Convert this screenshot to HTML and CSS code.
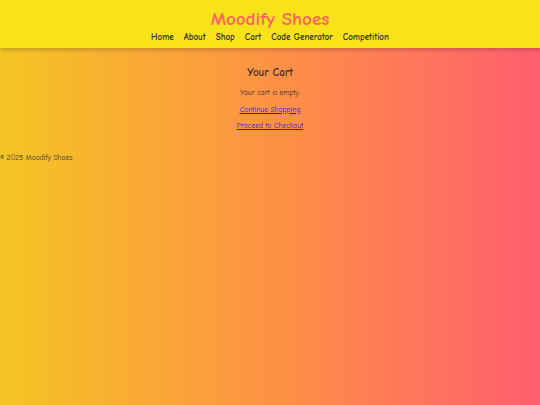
FILE: index.html
```html
<!DOCTYPE html>
<html>
  <head>
    <link rel="stylesheet" href="styles.css">
  </head>
  <body>
    <header class="site-header">
      <h1 class="brand">Moodify Shoes</h1>
      <nav class="main-nav">
        <a href="#">Home</a>
        <a href="#">About</a>
        <a href="#">Shop</a>
        <a href="#">Cart</a>
        <a href="#">Code Generator</a>
        <a href="#">Competition</a>
      </nav>
    </header>

    <main class="cart">
      <h2>Your Cart</h2>
      <p>Your cart is empty.</p>
      <p><a href="#">Continue Shopping</a></p>
      <p><a href="#">Proceed to Checkout</a></p>
    </main>

    <footer class="site-footer">
      <p>&copy; 2025 Moodify Shoes</p>
    </footer>
  </body>
</html>
```

FILE: styles.css
```css
body {
  margin: 0;
  min-height: 405px;
  font-family: "Comic Sans MS", "Comic Neue", "DejaVu Sans", sans-serif;
  color: #333;
  background: linear-gradient(to right, #f4c524 0%, #fd9244 50%, #ff5e6f 100%);
}

.site-header {
  background: #f8e21a;
  text-align: center;
  padding: 8px 0 5px;
  box-shadow: 0 2px 4px rgba(0, 0, 0, 0.2);
}

.brand {
  margin: 0;
  font-size: 19px;
  line-height: 22px;
  color: #ff6363;
}

.main-nav {
  display: flex;
  justify-content: center;
  gap: 10px;
  margin-top: 1px;
}

.main-nav a {
  font-size: 9px;
  font-weight: bold;
  line-height: 12px;
  color: #333;
  text-decoration: none;
}

.cart {
  text-align: center;
  padding-top: 18px;
}

.cart h2 {
  margin: 0 0 7px;
  font-size: 11px;
  line-height: 14px;
}

.cart p {
  margin: 0 0 5.5px;
  font-size: 7.5px;
  line-height: 11px;
}

.cart a {
  color: #2a1bd8;
}

.site-footer p {
  margin: 22px 0 0;
  font-size: 7.5px;
}
```
